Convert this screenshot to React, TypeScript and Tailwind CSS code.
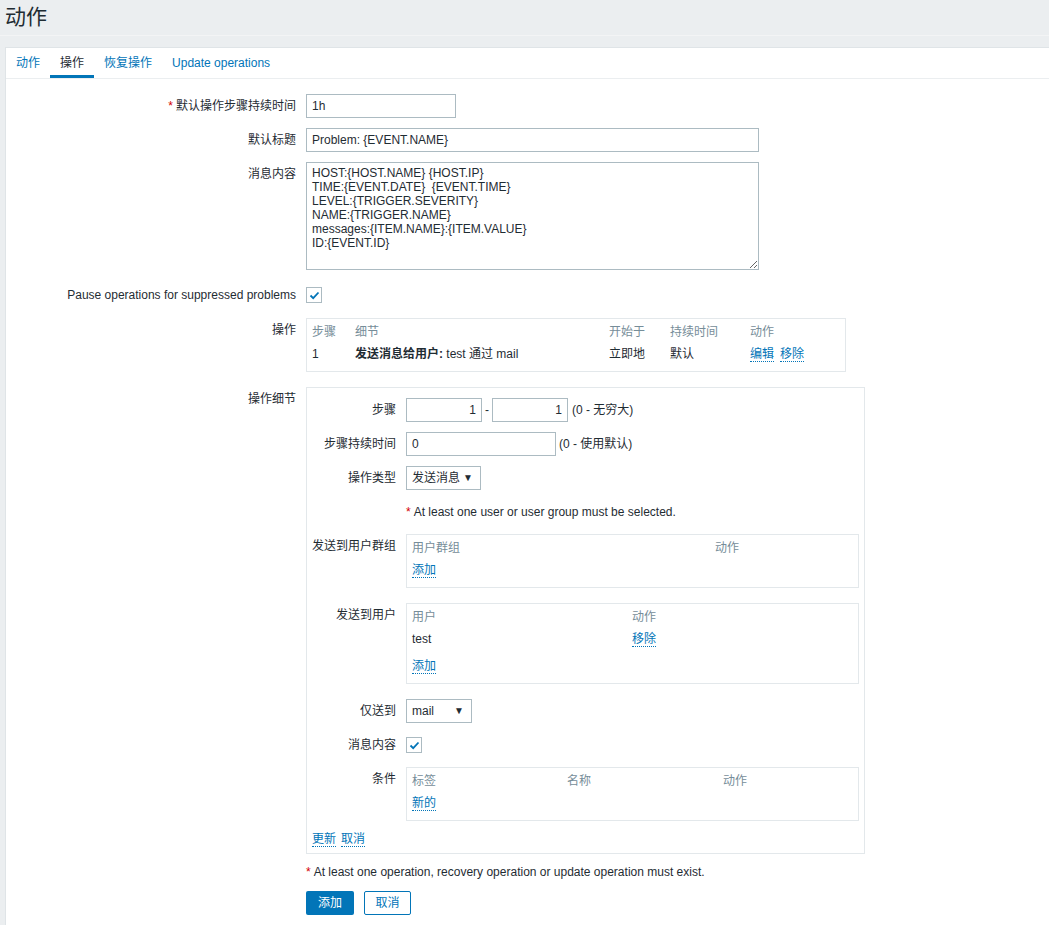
import React from "react";

const FONT = { fontFamily: '"Liberation Sans", Arial, "Noto Sans CJK SC", sans-serif' };

function Req() {
  return <span className="mr-[3px] text-[#d40000]">*</span>;
}

function Link({ children }: { children: React.ReactNode }) {
  return (
    <span className="cursor-pointer border-b border-dotted border-[#0275b8] leading-[14px] text-[#0275b8]">
      {children}
    </span>
  );
}

function Check() {
  return (
    <span className="flex h-4 w-4 items-center justify-center border border-[#acbbc2] bg-white">
      <svg width="11" height="9" viewBox="0 0 11 9">
        <polyline points="1.5,4.5 4.2,7.2 9.5,1.5" fill="none" stroke="#0275b8" strokeWidth="1.8" />
      </svg>
    </span>
  );
}

function Select({ value, w }: { value: string; w: string }) {
  return (
    <div className={`flex h-6 items-center justify-between border border-[#acbbc2] bg-white pl-[5px] pr-[7px] ${w}`}>
      <span>{value}</span>
      <span className="text-[10px] leading-none">▼</span>
    </div>
  );
}

// main form row: label column 300px, control after
function Row({
  label,
  children,
  className = "pb-[10px]",
}: {
  label: React.ReactNode;
  children: React.ReactNode;
  className?: string;
}) {
  return (
    <div className={`flex ${className}`}>
      <div className="w-[300px] shrink-0 pr-[10px] text-right leading-6">{label}</div>
      <div>{children}</div>
    </div>
  );
}

// nested row inside the operation details box
function SubRow({
  label,
  children,
  className = "pb-[10px]",
}: {
  label?: React.ReactNode;
  children: React.ReactNode;
  className?: string;
}) {
  return (
    <div className={`flex ${className}`}>
      <div className="w-[99px] shrink-0 pr-[10px] text-right leading-6">{label}</div>
      <div>{children}</div>
    </div>
  );
}

function Box({ w, children }: { w: string; children: React.ReactNode }) {
  return <div className={`border border-[#e3e8eb] bg-white px-[5px] pb-[6px] pt-[2px] ${w}`}>{children}</div>;
}

const TEXT = `HOST:{HOST.NAME} {HOST.IP}
TIME:{EVENT.DATE}  {EVENT.TIME}
LEVEL:{TRIGGER.SEVERITY}
NAME:{TRIGGER.NAME}
messages:{ITEM.NAME}:{ITEM.VALUE}
ID:{EVENT.ID}`;

export default function App() {
  const tabs = ["动作", "操作", "恢复操作", "Update operations"];

  return (
    <div className="min-h-[925px] w-[1049px] overflow-hidden bg-[#ebeef0] text-[12px] text-[#1f2c33]" style={FONT}>
      {/* page title */}
      <div className="h-[36px] border-b border-[#f3f4f5] pl-[5px]">
        <h1 className="text-[21px] leading-[34px]">动作</h1>
      </div>

      <div className="ml-[5px] mt-[11px] w-[1060px] border-l border-t border-[#dfe4e7] bg-white pb-[20px]">
        {/* tabs */}
        <div className="flex h-[31px] border-b border-[#ebeef0]">
          {tabs.map((t, i) => (
            <div
              key={t}
              className={`flex h-[30px] items-center px-[10px] ${
                i === 1 ? "border-b-[3px] border-[#0275b8] pt-[3px] text-[#1f2c33]" : "text-[#0275b8]"
              }`}
            >
              {t}
            </div>
          ))}
        </div>

        <div className="pt-[15px]">
          <Row label={<><Req />默认操作步骤持续时间</>}>
            <div className="h-6 w-[150px] border border-[#acbbc2] pl-[5px] leading-[22px]">1h</div>
          </Row>
          <Row label="默认标题">
            <div className="h-6 w-[453px] border border-[#acbbc2] pl-[5px] leading-[22px]">Problem: {"{EVENT.NAME}"}</div>
          </Row>
          <Row label="消息内容">
            <textarea
              readOnly
              defaultValue={TEXT}
              className="block h-[108px] w-[453px] resize border border-[#acbbc2] px-[5px] pt-[3px] text-[12px] leading-[14px] text-[#1f2c33] outline-none"
              style={FONT}
            />
          </Row>
          <Row label="Pause operations for suppressed problems" className="pb-[11px] pt-[3px]">
            <div className="flex h-6 items-center">
              <Check />
            </div>
          </Row>
          <Row label="操作" className="pb-[15px]">
            <Box w="w-[540px]">
              <div className="grid h-[22px] grid-cols-[43px_254px_61px_80px_1fr] items-center text-[#768d99]">
                <span>步骤</span>
                <span>细节</span>
                <span>开始于</span>
                <span>持续时间</span>
                <span>动作</span>
              </div>
              <div className="grid h-[22px] grid-cols-[43px_254px_61px_80px_1fr] items-center">
                <span>1</span>
                <span>
                  <b>发送消息给用户:</b> test 通过 mail
                </span>
                <span>立即地</span>
                <span>默认</span>
                <span className="flex gap-[6px]">
                  <Link>编辑</Link>
                  <Link>移除</Link>
                </span>
              </div>
            </Box>
          </Row>

          <Row label="操作细节" className="pb-[10px]">
            <div className="w-[559px] border border-[#e3e8eb] pb-[6px] pr-[5px] pt-[10px]">
              <SubRow label="步骤">
                <div className="flex items-center">
                  <div className="h-6 w-[76px] border border-[#acbbc2] pr-[5px] text-right leading-[22px]">1</div>
                  <span className="px-[3px]">-</span>
                  <div className="h-6 w-[76px] border border-[#acbbc2] pr-[5px] text-right leading-[22px]">1</div>
                  <span className="pl-[4px]">(0 - 无穷大)</span>
                </div>
              </SubRow>
              <SubRow label="步骤持续时间">
                <div className="flex items-center">
                  <div className="h-6 w-[150px] border border-[#acbbc2] pl-[5px] leading-[22px]">0</div>
                  <span className="pl-[3px]">(0 - 使用默认)</span>
                </div>
              </SubRow>
              <SubRow label="操作类型">
                <Select value="发送消息" w="w-[75px]" />
              </SubRow>
              <SubRow>
                <div className="h-6 leading-6">
                  <Req />At least one user or user group must be selected.
                </div>
              </SubRow>
              <SubRow label="发送到用户群组" className="pb-[15px]">
                <Box w="w-[453px]">
                  <div className="grid h-[22px] grid-cols-[303px_1fr] items-center text-[#768d99]">
                    <span>用户群组</span>
                    <span>动作</span>
                  </div>
                  <div className="flex h-[22px] items-center">
                    <Link>添加</Link>
                  </div>
                </Box>
              </SubRow>
              <SubRow label="发送到用户" className="pb-[15px]">
                <Box w="w-[453px]">
                  <div className="grid h-[22px] grid-cols-[220px_1fr] items-center text-[#768d99]">
                    <span>用户</span>
                    <span>动作</span>
                  </div>
                  <div className="grid h-[22px] grid-cols-[220px_1fr] items-center">
                    <span>test</span>
                    <span>
                      <Link>移除</Link>
                    </span>
                  </div>
                  <div className="mt-[5px] flex h-[22px] items-center">
                    <Link>添加</Link>
                  </div>
                </Box>
              </SubRow>
              <SubRow label="仅送到">
                <Select value="mail" w="w-[66px]" />
              </SubRow>
              <SubRow label="消息内容">
                <div className="flex h-6 items-center">
                  <Check />
                </div>
              </SubRow>
              <SubRow label="条件">
                <Box w="w-[453px]">
                  <div className="grid h-[22px] grid-cols-[155px_156px_1fr] items-center text-[#768d99]">
                    <span>标签</span>
                    <span>名称</span>
                    <span>动作</span>
                  </div>
                  <div className="flex h-[22px] items-center">
                    <Link>新的</Link>
                  </div>
                </Box>
              </SubRow>
              <div className="flex h-4 items-center gap-[5px] pl-[5px]">
                <Link>更新</Link>
                <Link>取消</Link>
              </div>
            </div>
          </Row>

          <div className="flex flex-col pl-[300px]">
            <div className="h-4 leading-4">
              <Req />At least one operation, recovery operation or update operation must exist.
            </div>
            <div className="mt-[11px] flex gap-[10px]">
              <button className="h-6 w-[48px] rounded-[2px] bg-[#0275b8] text-[12px] text-white" style={FONT}>
                添加
              </button>
              <button
                className="h-6 w-[47px] rounded-[2px] border border-[#0275b8] bg-white text-[12px] text-[#0275b8]"
                style={FONT}
              >
                取消
              </button>
            </div>
          </div>
        </div>
      </div>
    </div>
  );
}
